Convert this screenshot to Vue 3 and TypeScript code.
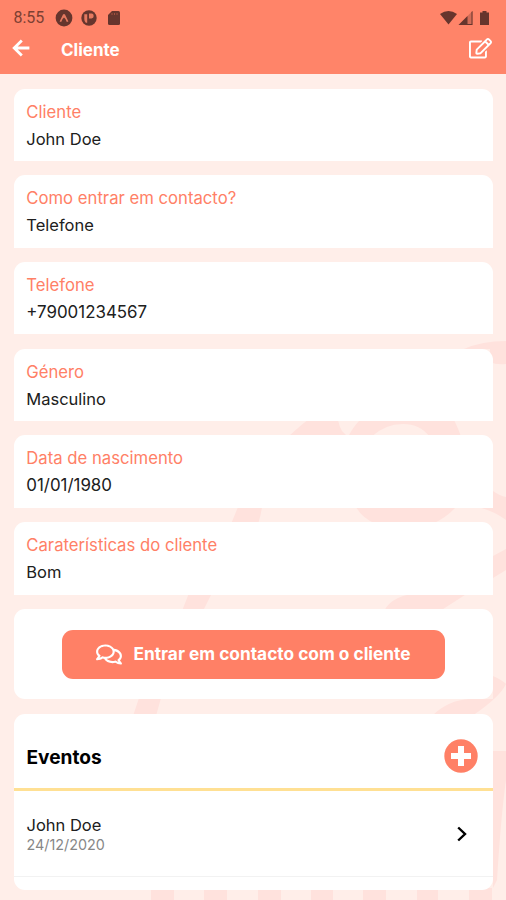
<script setup lang="ts">
interface Field {
  label: string
  value: string
  numeric?: boolean
}

interface ClientEvent {
  name: string
  date: string
}

const fields: Field[] = [
  { label: 'Cliente', value: 'John Doe' },
  { label: 'Como entrar em contacto?', value: 'Telefone' },
  { label: 'Telefone', value: '+79001234567', numeric: true },
  { label: 'Género', value: 'Masculino' },
  { label: 'Data de nascimento', value: '01/01/1980', numeric: true },
  { label: 'Caraterísticas do cliente', value: 'Bom' },
]

const events: ClientEvent[] = [{ name: 'John Doe', date: '24/12/2020' }]
</script>

<template>
  <div class="screen">
    <svg class="pattern" viewBox="0 0 506 900" aria-hidden="true">
      <path d="M464 349Q482 341 506 341V364Q496 365 490 362V349Z" />
      <path d="M288 437Q302 424 308 420H338Q339 426 342 431L348 437Z" />
      <path d="M348 437Q353 427 360 420H454Q459 430 461 437H430Q420 424 403 424Q385 424 371 437Z" />
      <path d="M238 507H262Q261 515 258 524H231ZM189 593H212L203 611H182ZM139 698H161L156 716H133Z" />
      <path d="M356 507H456Q446 518 432 524H376Q362 518 356 507Z" />
      <path d="M478 507H493V491Q500 496 506 497V520Q494 511 478 507Z" />
      <path d="M493 556L506 549V570L493 578Z" />
      <path d="M384 611Q393 594 422 593H468L440 611Z" />
      <path d="M432 716Q448 700 470 699H493V676Q502 680 506 684Q500 697 472 716Z" />
      <path d="M493 751H506V780Q501 815 497 880L493 888Z" />
      <path d="M151 888H174V900H151ZM204 888H227V900H204ZM258 888H281V900H258ZM311 888H333V900H311ZM363 888H386V900H363ZM417 888H438V900H417ZM469 888H492V900H469Z" />
    </svg>

    <header class="header">
      <div class="status">
        <span class="time">8:55</span>
        <svg class="dot-icon" viewBox="0 0 18 18">
          <circle cx="9" cy="9" r="8.4" fill="#66352d" />
          <path d="M4.6 12.6L8 5.6Q9 4.4 10 5.6L13.4 12.6L11.8 13Q10.5 9.3 9 8.6Q7.5 9.3 6.2 13Z" fill="#e57960" />
        </svg>
        <svg class="dot-icon" viewBox="0 0 18 18">
          <circle cx="9" cy="9" r="7.7" fill="#66352d" />
          <path d="M4.3 5.2H7.2V13.8H5.8Q4.3 12.5 4.3 10ZM9 4.6H11.5Q13.7 4.6 13.7 7Q13.7 9.4 11.5 9.4H9Z" fill="#e57960" />
        </svg>
        <svg class="sd-icon" viewBox="0 0 14 16">
          <path d="M5 1H11.5Q13 1 13 2.5V13.5Q13 15 11.5 15H2.5Q1 15 1 13.5V5Z" fill="#66352d" />
          <path d="M5 3V5M7.5 3V5M10 3V5" stroke="#a4513f" />
        </svg>
        <svg class="signals" viewBox="0 0 52 16">
          <g fill="#66352d">
            <path d="M0 4Q8.5-2 17 4L8.5 14.5Z" />
            <path d="M18.5 15L32.5 1V15Z" opacity=".3" />
            <path d="M18.5 15L27.5 6V15ZM27 14H32.5V15H27ZM31.5 2L32.5 1V15H31.5Z" />
            <path d="M42.5 1H46.5V2.5H49V15H40V2.5H42.5Z" />
          </g>
        </svg>
      </div>
      <div class="nav">
        <svg class="back" viewBox="0 0 18 18" fill="none" stroke="#fff" stroke-width="2.8">
          <path d="M9.8 1.5L2.2 9L9.8 16.5M2.4 9H17.4" />
        </svg>
        <h1>Cliente</h1>
        <svg class="edit" viewBox="0 0 576 512" fill="#fff">
          <path d="M402.3 344.9l32-32c5-5 13.7-1.5 13.7 5.7V464c0 26.5-21.5 48-48 48H48c-26.5 0-48-21.5-48-48V112c0-26.5 21.5-48 48-48h273.5c7.1 0 10.7 8.6 5.7 13.7l-32 32c-1.5 1.5-3.5 2.3-5.7 2.3H48v352h352V350.5c0-2.1.8-4.1 2.3-5.6zm156.6-201.8L296.3 405.7l-90.4 10c-26.2 2.9-48.5-19.2-45.6-45.6l10-90.4L432.9 17.1c22.9-22.9 59.9-22.9 82.7 0l43.2 43.2c22.9 22.9 22.9 60 .1 82.8zM460.1 174L402 115.9 216.2 301.8l-7.3 65.3 65.3-7.3L460.1 174zm64.8-79.7l-43.2-43.2c-4.1-4.1-10.8-4.1-14.8 0L436 82l58.1 58.1 30.9-30.9c4-4.2 4-10.8-.1-14.9z" />
        </svg>
      </div>
    </header>

    <main class="content">
      <section v-for="field in fields" :key="field.label" class="card field">
        <div class="label">{{ field.label }}</div>
        <div class="value" :class="{ numeric: field.numeric }">{{ field.value }}</div>
      </section>

      <section class="card action">
        <button class="contact">
          <svg viewBox="0 0 576 512" fill="#fff">
            <path d="M532 386.2c27.5-27.1 44-61.1 44-98.2 0-80-76.5-146.1-176.2-157.9C368.3 72.5 294.3 32 208 32 93.1 32 0 103.6 0 192c0 37 16.5 71 44 98.2-15.3 30.7-37.3 54.5-37.7 54.9-6.3 6.7-8.1 16.5-4.4 25 3.6 8.5 12 14 21.2 14 53.5 0 96.7-20.2 125.2-38.8 9.2 2.1 18.7 3.7 28.4 4.9C208.1 407.6 281.8 448 368 448c20.8 0 40.8-2.4 59.8-6.8C456.3 459.7 499.4 480 553 480c9.2 0 17.5-5.5 21.2-14 3.6-8.5 1.9-18.3-4.4-25-.4-.3-22.5-24.1-37.8-54.8zm-392.8-92.3L122.1 305c-14.1 9.1-28.5 16.3-43.1 21.4 2.7-4.7 5.4-9.7 8-14.8l15.5-31.1L77.7 256C64.2 242.6 48 220.7 48 192c0-60.7 73.3-112 160-112s160 51.3 160 112-73.3 112-160 112c-16.5 0-33-1.9-49-5.6l-19.8-4.5zM498.3 352l-24.7 24.4 15.5 31.1c2.6 5.1 5.3 10.1 8 14.8-14.6-5.1-29-12.3-43.1-21.4l-17.1-11.1-19.9 4.6c-16 3.7-32.5 5.6-49 5.6-54 0-102.2-20.1-131.3-49.7C338 339.5 416 272.9 416 192c0-3.4-.4-6.7-.7-10C479.7 196.5 528 238.8 528 288c0 28.7-16.2 50.6-29.7 64z" />
          </svg>
          <span>Entrar em contacto com o cliente</span>
        </button>
      </section>

      <section class="card events">
        <div class="events-head">
          <h2>Eventos</h2>
          <svg class="add" viewBox="0 0 34 34">
            <circle cx="17" cy="17" r="16.7" fill="#ff8066" />
            <path d="M17 7V27M7 17H27" stroke="#fff" stroke-width="6" />
          </svg>
        </div>
        <div v-for="event in events" :key="event.date" class="event">
          <div class="summary">
            <div class="name">{{ event.name }}</div>
            <div class="date">{{ event.date }}</div>
          </div>
          <svg class="chevron" viewBox="0 0 10 16" fill="none" stroke="#000" stroke-width="2.4">
            <path d="M1.2 1.5L8 8L1.2 14.5" />
          </svg>
        </div>
      </section>
    </main>
  </div>
</template>

<style>
body {
  margin: 0;
}
</style>

<style scoped>
.screen {
  position: relative;
  width: 506px;
  height: 900px;
  overflow: hidden;
  background: #ffeee9;
  font-family: Inter, "Liberation Sans", sans-serif;
  color: #202020;
}
.pattern {
  position: absolute;
  inset: 0;
  width: 506px;
  height: 900px;
  fill: #ffe2dd;
}
.header {
  position: relative;
  box-sizing: border-box;
  height: 73.5px;
  background: #ff8469;
}
.status {
  display: flex;
  align-items: center;
  height: 36px;
  padding: 0 14px 0 13.5px;
}
.time {
  width: 41.5px;
  font: 400 16px/20px Roboto, sans-serif;
  color: #7d4033;
}
.dot-icon {
  width: 18px;
  height: 18px;
  margin-right: 7px;
}
.sd-icon {
  width: 14px;
  height: 16px;
  margin-left: 2px;
}
.signals {
  width: 52px;
  height: 16px;
  margin: 0 0 0 auto;
}
.nav {
  display: flex;
  align-items: center;
  height: 26px;
  padding: 0 14px 0 12px;
}
.back {
  width: 18px;
  height: 18px;
  margin-top: -2px;
}
h1 {
  margin: 1px 0 0 31px;
  font-size: 17px;
  line-height: 24px;
  font-weight: 700;
  color: #fff;
}
.edit {
  width: 23px;
  height: 20.5px;
  margin: -1px 0 0 auto;
}
.content {
  position: relative;
  display: flex;
  flex-direction: column;
  gap: 14.35px;
  padding: 15px 13px 0 14px;
}
.card {
  box-sizing: border-box;
  background: #fff;
  border-radius: 11px;
}
.field {
  height: 72.4px;
  padding: 10px 12px 0 12.3px;
  border-radius: 11px 11px 0 0;
  font-size: 16.5px;
  line-height: 27px;
}
.label {
  font-size: 16.7px;
  color: #ff8066;
}
.numeric {
  font-size: 16.9px;
}
.action {
  display: flex;
  align-items: center;
  justify-content: center;
  height: 90.5px;
}
.contact {
  display: flex;
  align-items: center;
  justify-content: center;
  gap: 11px;
  width: 383px;
  height: 49px;
  padding: 0;
  border: 0;
  border-radius: 11px;
  background: #ff8066;
  color: #fff;
  font: 700 17.3px/24px Inter, sans-serif;
  white-space: nowrap;
}
.contact svg {
  width: 26px;
  height: 23px;
}
.events {
  height: 176px;
}
.events-head {
  box-sizing: border-box;
  display: flex;
  align-items: center;
  justify-content: space-between;
  height: 77.3px;
  padding: 10px 15px 0 12.5px;
  border-bottom: 3px solid #ffe093;
}
h2 {
  margin: 3px 0 0;
  font-size: 19.1px;
  line-height: 24px;
  font-weight: 700;
  color: #000;
}
.add {
  width: 34px;
  height: 34px;
}
.event {
  box-sizing: border-box;
  display: flex;
  align-items: center;
  justify-content: space-between;
  height: 86px;
  padding: 0 26.5px 0 12.5px;
  border-bottom: 1px solid #f2f2f2;
}
.summary {
  padding-top: 2px;
}
.name {
  font-size: 16.5px;
  line-height: 20px;
}
.date {
  font-size: 14.35px;
  line-height: 19px;
  color: #878787;
}
.chevron {
  width: 10px;
  height: 16px;
}
</style>
